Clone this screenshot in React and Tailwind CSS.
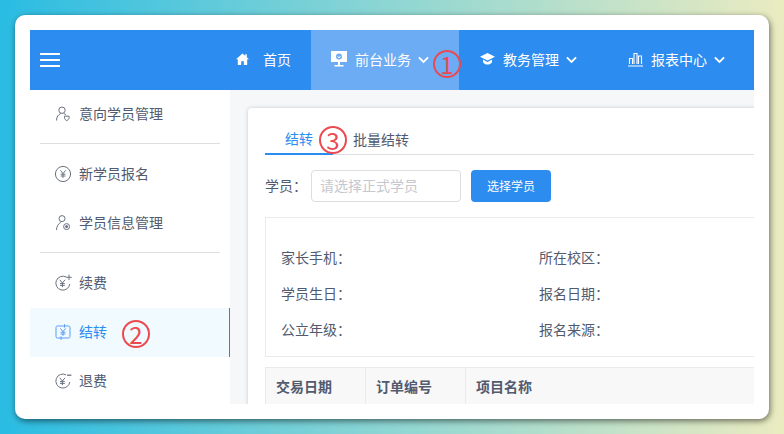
import React from "react";

const Chevron = () => (
  <svg width="11" height="8" viewBox="0 0 11 8" fill="none" stroke="white" strokeWidth="1.8" className="ml-[7px] mt-[1px]">
    <path d="M.9 1.4 5.5 6 10.1 1.4" />
  </svg>
);

const Yen = ({ x = 8, y = 8 }) => (
  <path d={`M${x - 2.6} ${y - 3.6} ${x} ${y - 0.4} ${x + 2.6} ${y - 3.6}M${x} ${y - 0.4}V${y + 3.8}M${x - 2.4} ${y + 0.2}H${x + 2.4}M${x - 2.4} ${y + 2}H${x + 2.4}`} />
);

const Svg = ({ children }) => (
  <svg width="18" height="18" viewBox="0 0 18 18" fill="none" stroke="currentColor" strokeWidth="1">{children}</svg>
);

const icons = {
  intent: (
    <Svg>
      <circle cx="8" cy="5.2" r="3.2" />
      <path d="M2.5 15.5c0-3.8 2-6 4.3-7M9.8 8.6c1 .3 1.8.9 2.3 1.6" />
      <path d="M10.5 11.2h4.6v1.6c0 1.3-1 2.2-2.3 2.8-1.3-.6-2.3-1.5-2.3-2.8z" />
    </Svg>
  ),
  yen: (
    <Svg>
      <circle cx="9" cy="9" r="7.6" />
      <Yen x={9} y={9} />
    </Svg>
  ),
  info: (
    <Svg>
      <circle cx="8" cy="4.6" r="3" />
      <path d="M2.5 16c0-3.8 2-6.4 4.3-7.6" />
      <circle cx="12.6" cy="12.6" r="3" />
      <circle cx="12.6" cy="12.6" r="1.1" fill="currentColor" />
    </Svg>
  ),
  renew: (
    <Svg>
      <path d="M12.5 3.2A7 7 0 1 0 15.8 10" />
      <Yen x={8.4} y={9.4} />
      <path d="M15 .6v5.4M12.3 3.3h5.4" />
    </Svg>
  ),
  transfer: (
    <Svg>
      <rect x="2" y="3" width="14" height="12" rx="1.5" />
      <Yen x={9} y={9} />
      <path d="M10.5 1.2v3.4M7 13.4v3.4" />
    </Svg>
  ),
  refund: (
    <Svg>
      <path d="M12 2.8A7 7 0 1 0 15.8 10" />
      <Yen x={8.4} y={9.4} />
      <path d="M13 3.2h4.4" strokeWidth="1.3" />
    </Svg>
  ),
};

const Row = ({ icon, label, active }) => (
  <div
    className={
      "h-[49px] flex items-center pl-[24px] pb-[2px] " +
      (active ? "bg-[#f0faff] text-[#2d8cf0] border-r border-[#3a7fd0]" : "text-[#515a6e]")
    }
  >
    <span className={active ? "text-[#5a9cf0]" : "text-[#6a7280]"}>{icons[icon]}</span>
    <span className="ml-[7px]">{label}</span>
  </div>
);

const Circled = ({ n, className }) => (
  <div
    className={
      "absolute w-[28px] h-[28px] rounded-full border-[2px] border-[#ea4a50] text-[#ea4a50] flex items-center justify-center text-[24px] font-normal leading-none " +
      className
    }
  >
    {n}
  </div>
);

const Info = ({ label }) => <div className="h-[36px] flex items-center">{label}：</div>;

export default function App() {
  return (
    <div
      className="w-[784px] h-[434px] overflow-hidden p-[15px] bg-[linear-gradient(90deg,#2abce3_0%,#8ed6d3_50%,#ebebc0_100%)] text-[14px] text-[#515a6e]"
      style={{ fontFamily: '"Noto Sans CJK SC", "Noto Sans", sans-serif' }}
    >
      <div className="relative w-[754px] h-[404px] bg-white rounded-[10px] p-[15px] shadow-[1px_2px_6px_rgba(0,0,0,0.55)]">
        <div className="h-[374px] flex flex-col overflow-hidden relative">
          {/* header */}
          <div className="h-[60px] shrink-0 bg-[#2d8cf0] text-white flex items-center">
            <div className="w-[186px] pl-[10px] shrink-0">
              <div className="w-[20px] flex flex-col gap-[3.5px]">
                <div className="h-[2.5px] bg-white" />
                <div className="h-[2.5px] bg-white" />
                <div className="h-[2.5px] bg-white" />
              </div>
            </div>
            <div className="h-full flex items-center w-[95px] pl-[20px] pb-[2px] shrink-0">
              <svg width="13" height="12" viewBox="0 0 13 12" fill="white">
                <path d="M6.5.5 0 6.3h1.8V12h3.4V8.2h2.6V12h3.4V6.3H13L10.8 4.2V1.2H9.2v1.5z" />
              </svg>
              <span className="ml-[14px]">首页</span>
            </div>
            <div className="h-full flex items-center w-[148px] pl-[20px] pb-[2px] bg-[#6cacf4] shrink-0">
              <svg width="16" height="16" viewBox="0 0 16 16" fill="white">
                <path fillRule="evenodd" d="M0 0h16v11H0zM5 5.5a3 3 0 1 0 6 0 3 3 0 0 0-6 0z" />
                <path d="M7 11h2v3H7zM3.5 14h9v1.5h-9z" />
                <path d="M6.5 5.4 8 7l1.6-2.2" stroke="white" strokeWidth="1" fill="none" />
              </svg>
              <span className="ml-[8px]">前台业务</span>
              <Chevron />
            </div>
            <div className="h-full flex items-center w-[149px] pl-[21px] pb-[2px] shrink-0">
              <svg width="15" height="12" viewBox="0 0 15 12" fill="white">
                <path d="M7.5 0 15 3.8 7.5 7.6 0 3.8z" />
                <path d="M3 6.6 7.5 9 12 6.6v2.6C11 10.8 9.4 11.6 7.5 11.6S4 10.8 3 9.2z" />
              </svg>
              <span className="ml-[8px]">教务管理</span>
              <Chevron />
            </div>
            <div className="h-full flex items-center flex-1 pl-[20px] pb-[2px]">
              <svg width="15" height="15" viewBox="0 0 15 15" fill="none" stroke="white" strokeWidth="1.1">
                <path d="M0 14h15M1.5 12V6.5h3V12M6 12V1.5h3V12M10.5 12V4h3v8" />
              </svg>
              <span className="ml-[8px]">报表中心</span>
              <Chevron />
            </div>
          </div>
          {/* body */}
          <div className="flex-1 flex min-h-0">
            <div className="w-[200px] shrink-0 bg-white">
              <Row icon="intent" label="意向学员管理" />
              <div className="mx-[10px] mt-[4px] mb-[6px] h-px bg-[#dcdee2]" />
              <Row icon="yen" label="新学员报名" />
              <Row icon="info" label="学员信息管理" />
              <div className="mx-[10px] mt-[4px] mb-[6px] h-px bg-[#dcdee2]" />
              <Row icon="renew" label="续费" />
              <Row icon="transfer" label="结转" active />
              <Row icon="refund" label="退费" />
            </div>
            <div className="flex-1 min-w-0 bg-[#f5f7f9] pl-[18px] pt-[18px] overflow-hidden">
              <div className="w-[540px] h-[400px] bg-white rounded-tl-[4px] shadow-[0_0_4px_rgba(0,0,0,0.18)] pl-[17px]">
                <div className="h-[47px] flex items-end border-b border-[#dcdee2]">
                  <div className="w-[68px] h-[32px] pl-[20px] flex items-center text-[#2d8cf0] border-b-[2px] border-[#2d8cf0] -mb-px">结转</div>
                  <div className="h-[32px] pl-[20px] flex items-center -mb-px">批量结转</div>
                </div>
                <div className="mt-[15px] h-[32px] flex items-center">
                  <span className="w-[46px] pb-[2px]">学员：</span>
                  <div className="w-[150px] h-[32px] border border-[#dcdee2] rounded-[4px] pl-[8px] pb-[2px] flex items-center text-[#c5c8ce]">请选择正式学员</div>
                  <div className="ml-[10px] w-[80px] h-[32px] rounded-[4px] bg-[#2d8cf0] text-white text-[12px] flex items-center justify-center">选择学员</div>
                </div>
                <div className="mt-[15px] h-[140px] border border-[#e8eaec] border-r-0 pl-[15px] pt-[21px] flex">
                  <div className="w-[258px]">
                    <Info label="家长手机" />
                    <Info label="学员生日" />
                    <Info label="公立年级" />
                  </div>
                  <div>
                    <Info label="所在校区" />
                    <Info label="报名日期" />
                    <Info label="报名来源" />
                  </div>
                </div>
                <div className="mt-[10px] flex h-[40px] bg-[#f8f8f9] border border-[#e8eaec] border-r-0 font-bold">
                  <div className="w-[100px] pl-[10px] pb-[2px] flex items-center border-r border-[#e8eaec]">交易日期</div>
                  <div className="w-[100px] pl-[10px] pb-[2px] flex items-center border-r border-[#e8eaec]">订单编号</div>
                  <div className="flex-1 pl-[10px] pb-[2px] flex items-center">项目名称</div>
                </div>
              </div>
            </div>
          </div>
          <Circled n="1" className="left-[403px] top-[20px]" />
          <Circled n="2" className="left-[92px] top-[290px]" />
          <Circled n="3" className="left-[289px] top-[96px]" />
        </div>
      </div>
    </div>
  );
}
